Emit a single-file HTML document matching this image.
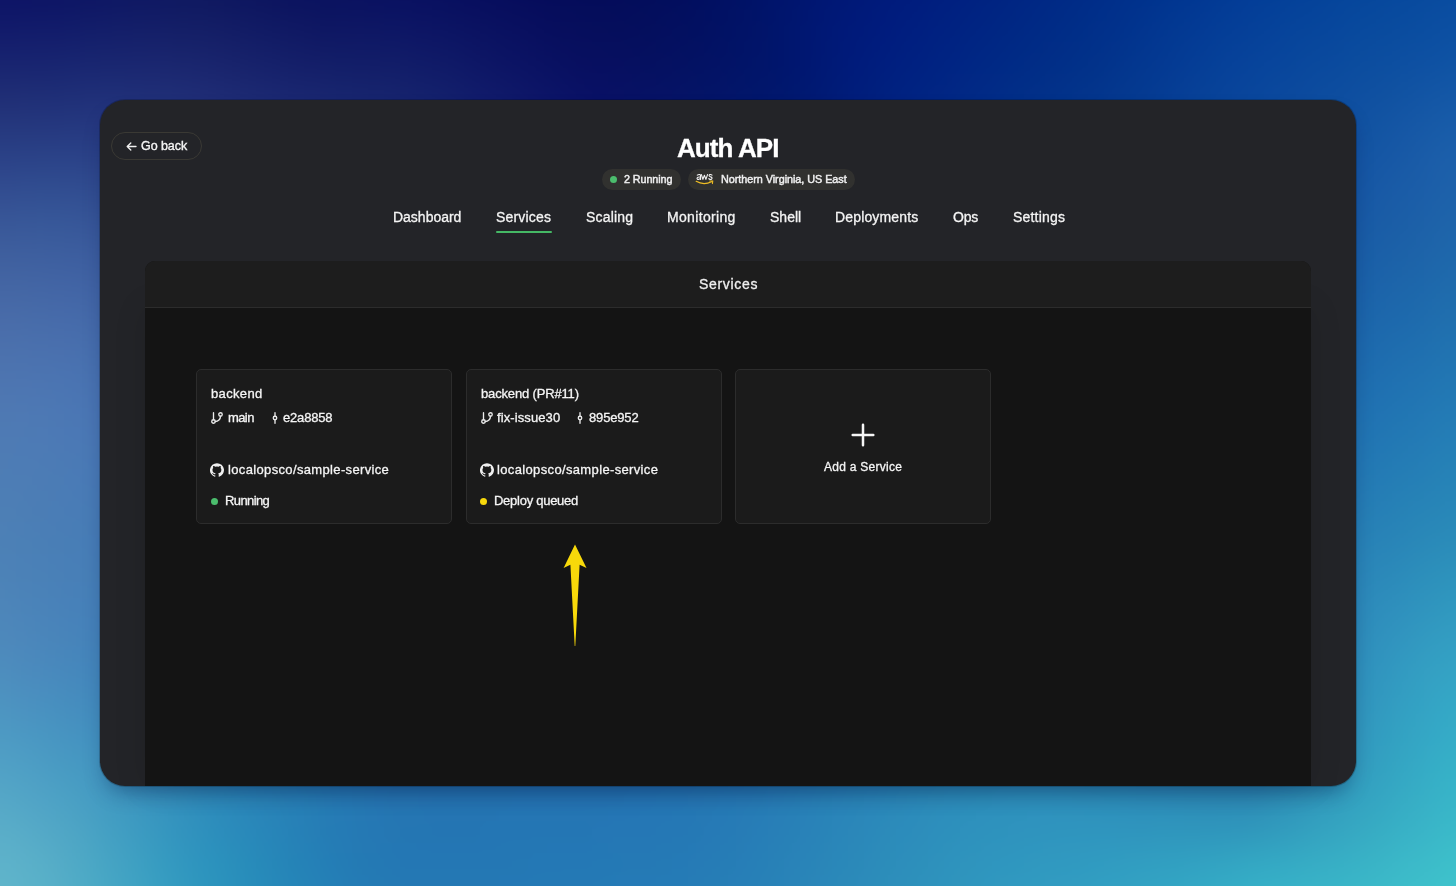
<!DOCTYPE html>
<html><head><meta charset="utf-8"><style>
html,body{margin:0;padding:0;width:1456px;height:886px;overflow:hidden;background:#1a4a9a;}
body{position:relative;font-family:"Liberation Sans",sans-serif;}
#bgw{position:absolute;left:0;top:0;width:1456px;height:886px;overflow:hidden}
#bg{position:absolute;left:-32px;top:-32px;width:1520px;height:950px;filter:blur(8px)}
#bg i{position:absolute;top:0;height:950px;display:block}
.panel{position:absolute;left:100px;top:100px;width:1256px;height:686px;border-radius:25px;background:#232428;box-shadow:0 0 0 1px rgba(0,0,0,.2),0 12px 22px -7px rgba(0,20,70,.42);overflow:hidden}
.t{position:absolute;white-space:nowrap;line-height:1;will-change:transform}
.ic{position:absolute;display:block;will-change:transform}
.goback{position:absolute;left:111.3px;top:132.2px;width:88.4px;height:26.2px;border:1px solid #3a3934;border-radius:15px}
.pill{position:absolute;top:169px;height:21px;border-radius:11px;background:#31312f}
.tab-ul{position:absolute;left:496px;top:231px;width:56px;height:2px;background:#45b865;border-radius:1px}
.svc{position:absolute;left:145px;top:261px;width:1166px;height:525px;border-radius:10px 10px 0 0;background:#141414;overflow:hidden}
.svcsh{position:absolute;left:145px;top:308px;width:1166px;height:478px;box-shadow:0 0 30px rgba(0,0,0,.12)}
.svc-h{position:absolute;left:0;top:0;width:1166px;height:46px;background:#1d1d1d;border-bottom:1px solid #2c2c2c}
.card{position:absolute;top:369px;width:254px;height:153px;background:#1b1b1b;border:1px solid #2c2c2c;border-radius:5px}
.dot{position:absolute;width:7px;height:7px;border-radius:50%}
</style></head><body>
<div id="bgw"><div id="bg">
<i style="left:0px;width:17px;background:linear-gradient(#0d1466 0px,#0d1466 32px,#121b6b 64px,#182470 96px,#1f2d75 128px,#25387e 160px,#2b4287 192px,#324d90 224px,#395798 256px,#3f5f9e 288px,#4466a4 320px,#496ba9 352px,#4c71ad 384px,#4e75b0 416px,#4e79b3 448px,#4e7bb4 480px,#4e7db4 512px,#4d7fb5 544px,#4d81b6 576px,#4d83b7 608px,#4d86b9 640px,#4e89bb 672px,#4e8ebe 704px,#4e94c1 736px,#4e9ac3 768px,#51a1c6 800px,#56a7c7 832px,#5aadc9 864px,#5eb2ca 896px,#60b6cb 928px,#60b6cb 950px)"></i>
<i style="left:16px;width:17px;background:linear-gradient(#0d1466 0px,#0d1466 32px,#121b6b 64px,#182470 96px,#1f2d75 128px,#25387e 160px,#2b4287 192px,#324d90 224px,#395798 256px,#3f5f9e 288px,#4466a4 320px,#496ba9 352px,#4c71ad 384px,#4e75b0 416px,#4e79b3 448px,#4e7bb4 480px,#4e7db4 512px,#4d7fb5 544px,#4d81b6 576px,#4d83b7 608px,#4d86b9 640px,#4e89bb 672px,#4e8ebe 704px,#4e94c1 736px,#4e9ac3 768px,#51a1c6 800px,#56a7c7 832px,#5aadc9 864px,#5eb2ca 896px,#60b6cb 928px,#60b6cb 950px)"></i>
<i style="left:32px;width:17px;background:linear-gradient(#0d1466 0px,#0d1466 32px,#121b6b 64px,#182470 96px,#1f2e75 128px,#25387e 160px,#2b4288 192px,#324d91 224px,#385798 256px,#3f5f9e 288px,#4466a4 320px,#496ca9 352px,#4b71ad 384px,#4d75b1 416px,#4e79b3 448px,#4e7bb4 480px,#4d7db5 512px,#4d7fb5 544px,#4c80b6 576px,#4c82b7 608px,#4d85b9 640px,#4d88bb 672px,#4d8dbe 704px,#4d93c0 736px,#4d9ac3 768px,#50a0c5 800px,#54a7c7 832px,#59adc8 864px,#5db2ca 896px,#5fb5ca 928px,#5fb5ca 950px)"></i>
<i style="left:48px;width:17px;background:linear-gradient(#0d1466 0px,#0d1466 32px,#121c6b 64px,#182470 96px,#1f2e76 128px,#25387e 160px,#2b4388 192px,#324e91 224px,#385899 256px,#3e5f9f 288px,#4466a4 320px,#486ca9 352px,#4b71ae 384px,#4d75b1 416px,#4e79b4 448px,#4d7bb5 480px,#4d7db5 512px,#4c7eb5 544px,#4b80b6 576px,#4b81b7 608px,#4b84b9 640px,#4c87bb 672px,#4b8bbd 704px,#4b91c0 736px,#4b98c3 768px,#4e9fc5 800px,#52a5c6 832px,#57abc8 864px,#5bb0c9 896px,#5cb3ca 928px,#5cb3ca 950px)"></i>
<i style="left:64px;width:17px;background:linear-gradient(#0d1565 0px,#0d1565 32px,#121c6b 64px,#182470 96px,#1f2e76 128px,#25387f 160px,#2b4388 192px,#314e91 224px,#385899 256px,#3e5f9f 288px,#4366a5 320px,#476caa 352px,#4a71ae 384px,#4c75b2 416px,#4d79b4 448px,#4d7bb5 480px,#4c7cb5 512px,#4b7db5 544px,#4a7fb6 576px,#4a81b7 608px,#4a83b9 640px,#4a86bb 672px,#4a8abd 704px,#4990c0 736px,#4997c2 768px,#4c9dc4 800px,#50a3c6 832px,#54a9c7 864px,#58afc8 896px,#59b2c9 928px,#59b2c9 950px)"></i>
<i style="left:80px;width:17px;background:linear-gradient(#0d1565 0px,#0d1565 32px,#121c6b 64px,#182570 96px,#1e2e77 128px,#25387f 160px,#2b4389 192px,#314e91 224px,#375899 256px,#3d5f9f 288px,#4365a5 320px,#476baa 352px,#4a70ae 384px,#4b75b2 416px,#4c78b4 448px,#4c7ab5 480px,#4b7cb5 512px,#4a7db6 544px,#497eb6 576px,#4980b7 608px,#4982b9 640px,#4985ba 672px,#4889bd 704px,#478fbf 736px,#4895c1 768px,#499bc3 800px,#4da2c5 832px,#51a7c6 864px,#55acc7 896px,#56afc8 928px,#56afc8 950px)"></i>
<i style="left:96px;width:17px;background:linear-gradient(#0d1665 0px,#0d1665 32px,#121d6b 64px,#182571 96px,#1f2f77 128px,#253980 160px,#2b4389 192px,#314e91 224px,#375799 256px,#3d5e9f 288px,#4265a5 320px,#466baa 352px,#4970ae 384px,#4a74b2 416px,#4b77b4 448px,#4b79b5 480px,#4a7bb6 512px,#497cb6 544px,#487eb6 576px,#487fb7 608px,#4781b9 640px,#4784ba 672px,#4688bc 704px,#468dbe 736px,#4693c1 768px,#479ac2 800px,#4aa0c4 832px,#4ea5c5 864px,#50aac6 896px,#51adc7 928px,#51adc7 950px)"></i>
<i style="left:112px;width:17px;background:linear-gradient(#0e1664 0px,#0e1664 32px,#131e6a 64px,#192671 96px,#1f2f78 128px,#253880 160px,#2b4388 192px,#314d91 224px,#375698 256px,#3c5e9f 288px,#4164a5 320px,#456aaa 352px,#476fae 384px,#4973b2 416px,#4a76b4 448px,#4a79b5 480px,#497ab6 512px,#487cb6 544px,#477db7 576px,#477fb7 608px,#4681b9 640px,#4583ba 672px,#4487bc 704px,#448cbe 736px,#4492c0 768px,#4598c2 800px,#479dc3 832px,#4aa3c4 864px,#4ca8c5 896px,#4dabc6 928px,#4dabc6 950px)"></i>
<i style="left:128px;width:17px;background:linear-gradient(#0e1764 0px,#0e1764 32px,#131e6a 64px,#192670 96px,#1f2f78 128px,#253880 160px,#2b4288 192px,#304c90 224px,#365598 256px,#3b5c9f 288px,#4063a4 320px,#4369a9 352px,#466eae 384px,#4872b1 416px,#4975b4 448px,#4978b5 480px,#487ab6 512px,#477bb6 544px,#467cb7 576px,#457eb7 608px,#4580b9 640px,#4483ba 672px,#4386bc 704px,#428bbd 736px,#4190bf 768px,#4296c1 800px,#439bc2 832px,#45a0c3 864px,#47a5c4 896px,#48a8c5 928px,#48a8c5 950px)"></i>
<i style="left:144px;width:17px;background:linear-gradient(#0e1864 0px,#0e1864 32px,#141f6a 64px,#192670 96px,#1f2f78 128px,#25387f 160px,#2b4188 192px,#304b90 224px,#355497 256px,#3a5b9e 288px,#3f62a4 320px,#4268a9 352px,#456dad 384px,#4771b1 416px,#4774b3 448px,#4777b5 480px,#4779b6 512px,#467ab6 544px,#457cb7 576px,#447eb8 608px,#4380b9 640px,#4282ba 672px,#4186bb 704px,#408abd 736px,#3f8fbe 768px,#3f94c0 800px,#4099c1 832px,#419ec2 864px,#43a2c3 896px,#43a5c4 928px,#43a5c4 950px)"></i>
<i style="left:160px;width:17px;background:linear-gradient(#0f1863 0px,#0f1863 32px,#141f69 64px,#1a2670 96px,#1f2f77 128px,#25377f 160px,#2a4187 192px,#304a8f 224px,#355297 256px,#3a5a9d 288px,#3e61a3 320px,#4167a8 352px,#446cad 384px,#4570b0 416px,#4673b3 448px,#4676b4 480px,#4678b5 512px,#457ab6 544px,#447bb7 576px,#437db7 608px,#427fb8 640px,#4082ba 672px,#3f85bb 704px,#3e89bc 736px,#3d8dbe 768px,#3c92bf 800px,#3d97c0 832px,#3d9bc1 864px,#3ea0c2 896px,#3fa3c3 928px,#3fa3c3 950px)"></i>
<i style="left:176px;width:17px;background:linear-gradient(#0f1863 0px,#0f1863 32px,#141f69 64px,#1a2670 96px,#1f2e77 128px,#25377f 160px,#2a4087 192px,#2f498e 224px,#345196 256px,#39599c 288px,#3d5fa2 320px,#4065a8 352px,#426aac 384px,#446faf 416px,#4572b2 448px,#4575b4 480px,#4477b5 512px,#4479b6 544px,#437bb7 576px,#417cb7 608px,#407eb8 640px,#3f81b9 672px,#3d84ba 704px,#3c88bc 736px,#3a8cbd 768px,#3a90be 800px,#3994bf 832px,#3999c0 864px,#399dc1 896px,#3aa0c2 928px,#3aa0c2 950px)"></i>
<i style="left:192px;width:17px;background:linear-gradient(#0f1962 0px,#0f1962 32px,#141f68 64px,#1a266f 96px,#1f2e76 128px,#25367e 160px,#2a3f86 192px,#2f478e 224px,#335095 256px,#38579c 288px,#3b5ea2 320px,#3f64a7 352px,#4169ab 384px,#436daf 416px,#4371b1 448px,#4474b3 480px,#4376b5 512px,#4278b6 544px,#417ab7 576px,#407cb7 608px,#3f7eb8 640px,#3d80b9 672px,#3b83ba 704px,#3a86bb 736px,#388abc 768px,#378ebd 800px,#3692be 832px,#3596bf 864px,#359ac0 896px,#369dc1 928px,#369dc1 950px)"></i>
<i style="left:208px;width:17px;background:linear-gradient(#0f1961 0px,#0f1961 32px,#141f67 64px,#1a266e 96px,#1f2d76 128px,#24357d 160px,#293e85 192px,#2e468d 224px,#324e94 256px,#37569b 288px,#3a5ca1 320px,#3d62a6 352px,#4067aa 384px,#416cae 416px,#4270b1 448px,#4273b3 480px,#4275b4 512px,#4178b5 544px,#4079b6 576px,#3f7bb7 608px,#3d7db8 640px,#3c80b9 672px,#3a82b9 704px,#3885ba 736px,#3688bb 768px,#348cbc 800px,#3390bd 832px,#3293be 864px,#3197bf 896px,#329abf 928px,#329abf 950px)"></i>
<i style="left:224px;width:17px;background:linear-gradient(#0f1961 0px,#0f1961 32px,#141f67 64px,#19256e 96px,#1f2c75 128px,#24347d 160px,#293c84 192px,#2d458c 224px,#324d93 256px,#36549a 288px,#395ba0 320px,#3c61a5 352px,#3e66aa 384px,#406bad 416px,#416eb0 448px,#4172b2 480px,#4174b4 512px,#4077b5 544px,#3f79b6 576px,#3e7bb7 608px,#3c7db8 640px,#3a7fb8 672px,#3881b9 704px,#3684ba 736px,#3487bb 768px,#328abb 800px,#308dbc 832px,#2f91bd 864px,#2e94be 896px,#2e97be 928px,#2e97be 950px)"></i>
<i style="left:240px;width:17px;background:linear-gradient(#0f1860 0px,#0f1860 32px,#141e66 64px,#19246d 96px,#1e2b74 128px,#23337c 160px,#283b83 192px,#2c438b 224px,#314b92 256px,#345399 288px,#38599f 320px,#3b5fa4 352px,#3d65a9 384px,#3e69ad 416px,#3f6db0 448px,#4071b2 480px,#3f73b4 512px,#3f76b5 544px,#3e78b6 576px,#3c7ab7 608px,#3b7cb7 640px,#397eb8 672px,#3780b9 704px,#3583b9 736px,#3285ba 768px,#3088ba 800px,#2e8bbb 832px,#2c8ebc 864px,#2b92bd 896px,#2c94bd 928px,#2c94bd 950px)"></i>
<i style="left:256px;width:17px;background:linear-gradient(#0e1760 0px,#0e1760 32px,#131d66 64px,#18236c 96px,#1d2a73 128px,#22327b 160px,#273a82 192px,#2b428a 224px,#304a91 256px,#335198 288px,#37589e 320px,#395ea4 352px,#3c63a8 384px,#3d68ac 416px,#3e6caf 448px,#3e6fb1 480px,#3e73b3 512px,#3e75b4 544px,#3d78b5 576px,#3b7ab6 608px,#3a7cb7 640px,#387eb8 672px,#3580b8 704px,#3382b9 736px,#3184b9 768px,#2e86ba 800px,#2c89ba 832px,#2b8bbb 864px,#2a8fbb 896px,#2a91bc 928px,#2a91bc 950px)"></i>
<i style="left:272px;width:17px;background:linear-gradient(#0d1660 0px,#0d1660 32px,#121c65 64px,#17226b 96px,#1c2972 128px,#21317a 160px,#263981 192px,#2a4189 224px,#2f4890 256px,#325097 288px,#35569d 320px,#385ca3 352px,#3a62a7 384px,#3c66ab 416px,#3d6bae 448px,#3d6eb1 480px,#3d72b3 512px,#3c74b4 544px,#3b77b5 576px,#3a79b6 608px,#387bb7 640px,#367db7 672px,#347fb8 704px,#3280b8 736px,#2f82b8 768px,#2d84b9 800px,#2b86b9 832px,#2989ba 864px,#288cba 896px,#288ebb 928px,#288ebb 950px)"></i>
<i style="left:288px;width:17px;background:linear-gradient(#0d155f 0px,#0d155f 32px,#111b65 64px,#16216b 96px,#1b2871 128px,#203079 160px,#253880 192px,#294088 224px,#2d478f 256px,#314e96 288px,#34559c 320px,#375ba2 352px,#3960a7 384px,#3a65ab 416px,#3b69ae 448px,#3c6db0 480px,#3c71b2 512px,#3b74b4 544px,#3a76b5 576px,#3979b6 608px,#377bb6 640px,#357cb7 672px,#337eb7 704px,#317fb7 736px,#2e81b8 768px,#2c82b8 800px,#2a84b8 832px,#2886b9 864px,#2789b9 896px,#278bba 928px,#278bba 950px)"></i>
<i style="left:304px;width:17px;background:linear-gradient(#0c145f 0px,#0c145f 32px,#101a64 64px,#15206a 96px,#1a2771 128px,#1f2f78 160px,#24377f 192px,#283e87 224px,#2c468e 256px,#304d95 288px,#33539b 320px,#3559a1 352px,#375fa6 384px,#3964aa 416px,#3a68ad 448px,#3a6cb0 480px,#3a70b2 512px,#3a73b3 544px,#3976b4 576px,#3878b5 608px,#367ab6 640px,#347cb6 672px,#327db7 704px,#307eb7 736px,#2d7fb7 768px,#2b80b7 800px,#2982b7 832px,#2784b8 864px,#2686b8 896px,#2688b9 928px,#2688b9 950px)"></i>
<i style="left:320px;width:17px;background:linear-gradient(#0b135f 0px,#0b135f 32px,#101964 64px,#141f69 96px,#192670 128px,#1e2e77 160px,#23367e 192px,#273d86 224px,#2b448d 256px,#2f4b94 288px,#32529b 320px,#3458a0 352px,#365da5 384px,#3862a9 416px,#3967ac 448px,#396baf 480px,#396fb1 512px,#3972b3 544px,#3875b4 576px,#3777b5 608px,#3579b6 640px,#347bb6 672px,#317cb6 704px,#2f7db6 736px,#2c7eb6 768px,#2a7fb6 800px,#2880b7 832px,#2681b7 864px,#2583b7 896px,#2586b8 928px,#2586b8 950px)"></i>
<i style="left:336px;width:17px;background:linear-gradient(#0b135f 0px,#0b135f 32px,#0f1863 64px,#141e69 96px,#19266f 128px,#1e2d76 160px,#22357e 192px,#263c85 224px,#2a438c 256px,#2d4a93 288px,#30509a 320px,#3356a0 352px,#355ca4 384px,#3661a8 416px,#3766ac 448px,#386aaf 480px,#386eb1 512px,#3871b2 544px,#3774b4 576px,#3677b5 608px,#3579b5 640px,#337ab6 672px,#317cb6 704px,#2e7cb6 736px,#2c7db6 768px,#297db6 800px,#277eb6 832px,#267fb6 864px,#2581b7 896px,#2583b7 928px,#2583b7 950px)"></i>
<i style="left:352px;width:17px;background:linear-gradient(#0a125f 0px,#0a125f 32px,#0e1763 64px,#131e68 96px,#18256f 128px,#1d2c75 160px,#21347d 192px,#253b84 224px,#29418c 256px,#2c4893 288px,#2f4f99 320px,#31559f 352px,#335aa4 384px,#3560a8 416px,#3664ab 448px,#3769ae 480px,#376db0 512px,#3770b2 544px,#3673b3 576px,#3576b4 608px,#3478b5 640px,#327ab5 672px,#307bb5 704px,#2e7bb5 736px,#2b7bb5 768px,#297bb5 800px,#277cb5 832px,#257cb5 864px,#247eb6 896px,#2481b6 928px,#2481b6 950px)"></i>
<i style="left:368px;width:17px;background:linear-gradient(#0a1260 0px,#0a1260 32px,#0e1764 64px,#121e68 96px,#17256e 128px,#1c2c75 160px,#20337c 192px,#243983 224px,#28408b 256px,#2b4792 288px,#2e4d98 320px,#30539e 352px,#3259a3 384px,#345ea7 416px,#3563ab 448px,#3668ad 480px,#366cb0 512px,#366fb1 544px,#3573b3 576px,#3476b4 608px,#3378b5 640px,#3179b5 672px,#2f7ab5 704px,#2d7ab5 736px,#2b7ab5 768px,#287ab5 800px,#267ab5 832px,#257bb5 864px,#247cb5 896px,#247eb6 928px,#247eb6 950px)"></i>
<i style="left:384px;width:17px;background:linear-gradient(#0a1260 0px,#0a1260 32px,#0e1764 64px,#121d68 96px,#17246e 128px,#1b2b74 160px,#1f317b 192px,#233883 224px,#263f8a 256px,#2a4591 288px,#2c4c98 320px,#2f529d 352px,#3157a2 384px,#325da6 416px,#3462aa 448px,#3467ad 480px,#356baf 512px,#356fb1 544px,#3472b2 576px,#3475b3 608px,#3277b4 640px,#3179b5 672px,#2f7ab5 704px,#2d7ab5 736px,#2a79b4 768px,#2879b4 800px,#2679b4 832px,#2579b4 864px,#247ab4 896px,#247cb5 928px,#247cb5 950px)"></i>
<i style="left:400px;width:17px;background:linear-gradient(#0a1161 0px,#0a1161 32px,#0e1764 64px,#121d68 96px,#16246d 128px,#1b2a74 160px,#1e307a 192px,#223782 224px,#253d89 256px,#284490 288px,#2b4a97 320px,#2d509d 352px,#2f56a2 384px,#315ca6 416px,#3261a9 448px,#3365ac 480px,#346aaf 512px,#346eb1 544px,#3371b2 576px,#3374b3 608px,#3277b4 640px,#3079b4 672px,#2e79b4 704px,#2c79b4 736px,#2a78b4 768px,#2878b4 800px,#2677b4 832px,#2578b4 864px,#2479b4 896px,#247bb5 928px,#247bb5 950px)"></i>
<i style="left:416px;width:17px;background:linear-gradient(#091161 0px,#091161 32px,#0d1765 64px,#121d68 96px,#16236d 128px,#1a2973 160px,#1d2f7a 192px,#213581 224px,#243c88 256px,#27428f 288px,#2a4896 320px,#2c4f9c 352px,#2e55a1 384px,#305aa5 416px,#315fa9 448px,#3264ac 480px,#3369ae 512px,#336db0 544px,#3270b2 576px,#3274b3 608px,#3176b4 640px,#3078b4 672px,#2e79b4 704px,#2c78b4 736px,#2a78b4 768px,#2877b4 800px,#2676b3 832px,#2577b3 864px,#2478b4 896px,#247ab4 928px,#247ab4 950px)"></i>
<i style="left:432px;width:17px;background:linear-gradient(#091161 0px,#091161 32px,#0d1665 64px,#111c68 96px,#15226d 128px,#192872 160px,#1c2e79 192px,#203480 224px,#233a87 256px,#26408e 288px,#284795 320px,#2b4d9b 352px,#2d53a0 384px,#2f59a4 416px,#305ea8 448px,#3163ab 480px,#3168ae 512px,#326cb0 544px,#3270b1 576px,#3173b2 608px,#3075b3 640px,#2f77b4 672px,#2d78b4 704px,#2b78b4 736px,#2977b4 768px,#2776b3 800px,#2676b3 832px,#2476b3 864px,#2477b4 896px,#2479b4 928px,#2479b4 950px)"></i>
<i style="left:448px;width:17px;background:linear-gradient(#091061 0px,#091061 32px,#0d1564 64px,#101b68 96px,#14216c 128px,#182772 160px,#1b2c78 192px,#1e327f 224px,#213886 256px,#243f8e 288px,#274594 320px,#294c9a 352px,#2c529f 384px,#2d58a4 416px,#2f5da7 448px,#3062ab 480px,#3067ad 512px,#316baf 544px,#316fb1 576px,#3072b2 608px,#3075b3 640px,#2e76b4 672px,#2d77b4 704px,#2b77b4 736px,#2976b3 768px,#2776b3 800px,#2675b3 832px,#2476b3 864px,#2477b4 896px,#2479b4 928px,#2479b4 950px)"></i>
<i style="left:464px;width:17px;background:linear-gradient(#081060 0px,#081060 32px,#0c1564 64px,#101a67 96px,#13206c 128px,#172571 160px,#1a2b78 192px,#1d317e 224px,#203786 256px,#233d8d 288px,#264493 320px,#284a99 352px,#2a509e 384px,#2c56a3 416px,#2d5ca7 448px,#2f61aa 480px,#2f66ad 512px,#306aaf 544px,#306eb1 576px,#2f71b2 608px,#2f74b3 640px,#2e75b3 672px,#2c76b4 704px,#2b76b4 736px,#2976b3 768px,#2775b3 800px,#2575b3 832px,#2475b3 864px,#2477b4 896px,#2479b4 928px,#2479b4 950px)"></i>
<i style="left:480px;width:17px;background:linear-gradient(#080f5f 0px,#080f5f 32px,#0b1463 64px,#0f1967 96px,#121e6b 128px,#162371 160px,#192977 192px,#1c2f7e 224px,#1f3585 256px,#223c8c 288px,#244292 320px,#274998 352px,#294f9d 384px,#2b55a2 416px,#2c5ba6 448px,#2d60a9 480px,#2e65ac 512px,#2f69af 544px,#2f6db0 576px,#2f70b2 608px,#2e73b3 640px,#2d75b3 672px,#2c75b3 704px,#2a75b3 736px,#2875b3 768px,#2775b3 800px,#2575b3 832px,#2475b3 864px,#2477b4 896px,#2479b4 928px,#2479b4 950px)"></i>
<i style="left:496px;width:17px;background:linear-gradient(#080e5f 0px,#080e5f 32px,#0b1362 64px,#0e1766 96px,#111c6b 128px,#142170 160px,#172776 192px,#1a2d7d 224px,#1d3384 256px,#203a8b 288px,#234191 320px,#254797 352px,#284e9d 384px,#2a54a1 416px,#2b5aa5 448px,#2c5fa9 480px,#2d64ac 512px,#2e68ae 544px,#2e6cb0 576px,#2e6fb1 608px,#2d72b2 640px,#2c74b3 672px,#2b75b3 704px,#2a75b3 736px,#2875b3 768px,#2775b3 800px,#2575b3 832px,#2475b3 864px,#2477b4 896px,#2479b4 928px,#2479b4 950px)"></i>
<i style="left:512px;width:17px;background:linear-gradient(#070e5e 0px,#070e5e 32px,#0a1261 64px,#0d1665 96px,#101a6a 128px,#131f6f 160px,#162575 192px,#192b7c 224px,#1c3283 256px,#1f388a 288px,#223f90 320px,#244696 352px,#264c9c 384px,#2853a1 416px,#2a58a5 448px,#2b5ea8 480px,#2c63ab 512px,#2d67ae 544px,#2d6bb0 576px,#2d6fb1 608px,#2d71b2 640px,#2c73b3 672px,#2b74b3 704px,#2974b3 736px,#2874b3 768px,#2674b3 800px,#2575b3 832px,#2476b4 864px,#2477b4 896px,#2479b5 928px,#2479b5 950px)"></i>
<i style="left:528px;width:17px;background:linear-gradient(#070d5d 0px,#070d5d 32px,#091161 64px,#0c1464 96px,#0f1969 128px,#121e6e 160px,#152374 192px,#18297b 224px,#1b3082 256px,#1d3789 288px,#203e8f 320px,#234495 352px,#254b9b 384px,#2751a0 416px,#2957a4 448px,#2a5da8 480px,#2b62ab 512px,#2c67ae 544px,#2c6bb0 576px,#2c6eb1 608px,#2c70b2 640px,#2b72b3 672px,#2a73b3 704px,#2974b3 736px,#2874b3 768px,#2674b3 800px,#2575b3 832px,#2476b4 864px,#2477b4 896px,#2479b5 928px,#2479b5 950px)"></i>
<i style="left:544px;width:17px;background:linear-gradient(#060d5c 0px,#060d5c 32px,#091060 64px,#0b1364 96px,#0e1768 128px,#101c6e 160px,#132174 192px,#16287a 224px,#192e81 256px,#1c3588 288px,#1f3c8e 320px,#214395 352px,#244a9a 384px,#26509f 416px,#2857a4 448px,#295ca8 480px,#2a61ab 512px,#2b66ad 544px,#2c6aaf 576px,#2c6db1 608px,#2b70b2 640px,#2b71b3 672px,#2a73b3 704px,#2973b3 736px,#2774b3 768px,#2674b3 800px,#2575b4 832px,#2476b4 864px,#2478b4 896px,#2479b5 928px,#2479b5 950px)"></i>
<i style="left:560px;width:17px;background:linear-gradient(#060c5c 0px,#060c5c 32px,#080f5f 64px,#0a1263 96px,#0d1567 128px,#0f1a6d 160px,#122073 192px,#152679 224px,#182d80 256px,#1b3487 288px,#1e3b8e 320px,#204294 352px,#23499a 384px,#25509f 416px,#2756a3 448px,#285ba7 480px,#2961ab 512px,#2a65ad 544px,#2b69af 576px,#2b6cb1 608px,#2b6fb2 640px,#2a71b3 672px,#2972b3 704px,#2873b3 736px,#2773b3 768px,#2674b4 800px,#2575b4 832px,#2476b4 864px,#2478b5 896px,#2479b5 928px,#2479b5 950px)"></i>
<i style="left:576px;width:17px;background:linear-gradient(#050c5b 0px,#050c5b 32px,#070e5e 64px,#091162 96px,#0b1467 128px,#0e186c 160px,#111e72 192px,#132479 224px,#162b7f 256px,#193386 288px,#1c3a8d 320px,#1f4193 352px,#214899 384px,#244f9e 416px,#2655a3 448px,#275ba7 480px,#2960aa 512px,#2965ad 544px,#2a69af 576px,#2a6cb1 608px,#2a6fb2 640px,#2a71b3 672px,#2972b3 704px,#2873b3 736px,#2773b4 768px,#2674b4 800px,#2575b4 832px,#2476b4 864px,#2478b5 896px,#247ab5 928px,#247ab5 950px)"></i>
<i style="left:592px;width:17px;background:linear-gradient(#050c5b 0px,#050c5b 32px,#070e5d 64px,#081061 96px,#0a1266 128px,#0d176b 160px,#0f1d71 192px,#122378 224px,#152a7f 256px,#183186 288px,#1b398c 320px,#1e4093 352px,#204799 384px,#234e9e 416px,#2554a3 448px,#265aa7 480px,#2860aa 512px,#2964ad 544px,#2968af 576px,#2a6cb1 608px,#296eb2 640px,#2970b3 672px,#2872b3 704px,#2873b4 736px,#2773b4 768px,#2674b4 800px,#2575b4 832px,#2476b4 864px,#2478b5 896px,#247ab5 928px,#247ab5 950px)"></i>
<i style="left:608px;width:17px;background:linear-gradient(#040c5a 0px,#040c5a 32px,#060e5d 64px,#080f60 96px,#091165 128px,#0b166b 160px,#0e1b71 192px,#112277 224px,#14297e 256px,#173185 288px,#1a388c 320px,#1d3f92 352px,#1f4798 384px,#224d9e 416px,#2454a3 448px,#265aa7 480px,#275faa 512px,#2864ad 544px,#2968af 576px,#296bb1 608px,#296eb2 640px,#2970b3 672px,#2871b3 704px,#2772b4 736px,#2773b4 768px,#2674b4 800px,#2575b4 832px,#2476b4 864px,#2478b5 896px,#247ab5 928px,#247ab5 950px)"></i>
<i style="left:624px;width:17px;background:linear-gradient(#040c5a 0px,#040c5a 32px,#060e5c 64px,#070f60 96px,#081065 128px,#0a156a 160px,#0d1b70 192px,#102177 224px,#13287e 256px,#163085 288px,#19378b 320px,#1b3f92 352px,#1e4698 384px,#214d9e 416px,#2353a2 448px,#2559a7 480px,#265faa 512px,#2764ad 544px,#2868af 576px,#286bb1 608px,#296eb2 640px,#2870b3 672px,#2871b4 704px,#2772b4 736px,#2673b4 768px,#2674b4 800px,#2575b4 832px,#2577b5 864px,#2479b5 896px,#247ab6 928px,#247ab6 950px)"></i>
<i style="left:640px;width:17px;background:linear-gradient(#040c5b 0px,#040c5b 32px,#050e5c 64px,#070f60 96px,#081164 128px,#09156a 160px,#0c1a70 192px,#0f2176 224px,#11287d 256px,#142f84 288px,#17378b 320px,#1a3e92 352px,#1d4698 384px,#204d9d 416px,#2253a2 448px,#2459a7 480px,#255faa 512px,#2764ad 544px,#2768af 576px,#286bb1 608px,#286eb2 640px,#2870b3 672px,#2871b4 704px,#2773b4 736px,#2674b4 768px,#2674b4 800px,#2575b4 832px,#2577b5 864px,#2479b5 896px,#257bb6 928px,#257bb6 950px)"></i>
<i style="left:656px;width:17px;background:linear-gradient(#030d5b 0px,#030d5b 32px,#050e5d 64px,#061060 96px,#071164 128px,#09156a 160px,#0b1a70 192px,#0e2076 224px,#10277d 256px,#132f84 288px,#16368b 320px,#193e91 352px,#1c4598 384px,#1f4c9d 416px,#2153a2 448px,#2359a7 480px,#255faa 512px,#2664ad 544px,#2768b0 576px,#276bb1 608px,#286eb3 640px,#2870b3 672px,#2772b4 704px,#2773b4 736px,#2674b4 768px,#2675b4 800px,#2576b5 832px,#2577b5 864px,#2579b5 896px,#257bb6 928px,#257bb6 950px)"></i>
<i style="left:672px;width:17px;background:linear-gradient(#030d5c 0px,#030d5c 32px,#040f5d 64px,#051060 96px,#061265 128px,#08156a 160px,#0a1a70 192px,#0d2076 224px,#0f277d 256px,#122e84 288px,#15368b 320px,#183e91 352px,#1b4598 384px,#1e4c9d 416px,#2053a3 448px,#2259a7 480px,#245fab 512px,#2664ae 544px,#2668b0 576px,#276bb2 608px,#276eb3 640px,#2770b4 672px,#2772b4 704px,#2773b4 736px,#2674b5 768px,#2675b5 800px,#2576b5 832px,#2577b5 864px,#2579b5 896px,#257bb6 928px,#257bb6 950px)"></i>
<i style="left:688px;width:17px;background:linear-gradient(#020e5d 0px,#020e5d 32px,#040f5f 64px,#051161 96px,#061265 128px,#07166a 160px,#091a70 192px,#0c2076 224px,#0e277d 256px,#112e84 288px,#14368b 320px,#173e91 352px,#1a4598 384px,#1d4c9e 416px,#2053a3 448px,#2259a7 480px,#245fab 512px,#2564ae 544px,#2668b0 576px,#276cb2 608px,#276fb3 640px,#2771b4 672px,#2772b4 704px,#2774b5 736px,#2675b5 768px,#2676b5 800px,#2577b5 832px,#2578b5 864px,#257ab5 896px,#257cb6 928px,#257cb6 950px)"></i>
<i style="left:704px;width:17px;background:linear-gradient(#020e5e 0px,#020e5e 32px,#031060 64px,#041162 96px,#051366 128px,#06166a 160px,#081b70 192px,#0b2176 224px,#0d277d 256px,#102e84 288px,#13368b 320px,#163e91 352px,#194598 384px,#1c4c9e 416px,#1f53a3 448px,#215aa8 480px,#235fab 512px,#2464ae 544px,#2669b0 576px,#266cb2 608px,#276fb3 640px,#2771b4 672px,#2773b5 704px,#2774b5 736px,#2675b5 768px,#2676b5 800px,#2577b5 832px,#2578b5 864px,#257ab6 896px,#257cb6 928px,#257cb6 950px)"></i>
<i style="left:720px;width:17px;background:linear-gradient(#010f60 0px,#010f60 32px,#021061 64px,#031263 96px,#041466 128px,#05176b 160px,#071b70 192px,#0a2177 224px,#0c287d 256px,#0f2f84 288px,#12368b 320px,#153e92 352px,#194598 384px,#1b4d9e 416px,#1e54a3 448px,#215aa8 480px,#2260ac 512px,#2465ae 544px,#2569b1 576px,#266db2 608px,#2770b4 640px,#2772b5 672px,#2774b5 704px,#2775b5 736px,#2676b5 768px,#2677b5 800px,#2678b5 832px,#2579b5 864px,#267bb6 896px,#267db6 928px,#267db6 950px)"></i>
<i style="left:736px;width:17px;background:linear-gradient(#011062 0px,#011062 32px,#021163 64px,#031265 96px,#031467 128px,#05176c 160px,#071c71 192px,#092177 224px,#0c287e 256px,#0e2f84 288px,#11368b 320px,#153e92 352px,#184698 384px,#1b4d9e 416px,#1e54a4 448px,#205aa8 480px,#2260ac 512px,#2465af 544px,#256ab1 576px,#266db3 608px,#2670b4 640px,#2773b5 672px,#2775b5 704px,#2776b6 736px,#2777b6 768px,#2678b6 800px,#2679b5 832px,#267ab6 864px,#267cb6 896px,#267eb6 928px,#267eb6 950px)"></i>
<i style="left:752px;width:17px;background:linear-gradient(#011164 0px,#011164 32px,#011265 64px,#021366 96px,#031569 128px,#04186d 160px,#061c72 192px,#082278 224px,#0b287e 256px,#0e2f85 288px,#11378c 320px,#143e92 352px,#174699 384px,#1a4d9f 416px,#1d54a4 448px,#1f5ba9 480px,#2161ac 512px,#2366af 544px,#246ab1 576px,#256eb3 608px,#2671b4 640px,#2774b5 672px,#2776b6 704px,#2777b6 736px,#2778b6 768px,#2779b6 800px,#267ab6 832px,#267bb6 864px,#267db6 896px,#277fb7 928px,#277fb7 950px)"></i>
<i style="left:768px;width:17px;background:linear-gradient(#001266 0px,#001266 32px,#011367 64px,#011468 96px,#02166a 128px,#03196e 160px,#051d73 192px,#072379 224px,#0a297f 256px,#0d3086 288px,#10378c 320px,#133f93 352px,#164699 384px,#194e9f 416px,#1c55a4 448px,#1f5ca9 480px,#2161ad 512px,#2367b0 544px,#246bb2 576px,#256fb4 608px,#2672b5 640px,#2775b6 672px,#2777b6 704px,#2778b6 736px,#2779b6 768px,#277ab6 800px,#277bb6 832px,#277cb6 864px,#277eb7 896px,#2780b7 928px,#2780b7 950px)"></i>
<i style="left:784px;width:17px;background:linear-gradient(#001369 0px,#001369 32px,#011469 64px,#01156a 96px,#01166b 128px,#03196f 160px,#041e74 192px,#07237a 224px,#092a80 256px,#0c3186 288px,#0f388d 320px,#123f93 352px,#15479a 384px,#184e9f 416px,#1b56a5 448px,#1e5ca9 480px,#2062ad 512px,#2267b0 544px,#246cb2 576px,#2570b4 608px,#2673b5 640px,#2776b6 672px,#2778b7 704px,#2779b7 736px,#277ab7 768px,#277bb7 800px,#277cb6 832px,#277eb7 864px,#2780b7 896px,#2881b7 928px,#2881b7 950px)"></i>
<i style="left:800px;width:17px;background:linear-gradient(#00146c 0px,#00146c 32px,#00156c 64px,#00156c 96px,#01176d 128px,#021a70 160px,#041f75 192px,#06247b 224px,#082b81 256px,#0b3187 288px,#0e398e 320px,#114094 352px,#15489a 384px,#184fa0 416px,#1b56a5 448px,#1d5daa 480px,#2063ad 512px,#2268b0 544px,#246db3 576px,#2571b4 608px,#2674b6 640px,#2777b6 672px,#2779b7 704px,#287bb7 736px,#287cb7 768px,#287db7 800px,#287eb7 832px,#287fb7 864px,#2881b7 896px,#2883b8 928px,#2883b8 950px)"></i>
<i style="left:816px;width:17px;background:linear-gradient(#00156e 0px,#00156e 32px,#00166f 64px,#00166f 96px,#00186f 128px,#011b72 160px,#032077 192px,#05257c 224px,#082c82 256px,#0b3288 288px,#0e398f 320px,#114195 352px,#14489b 384px,#1750a0 416px,#1a57a5 448px,#1d5daa 480px,#1f64ae 512px,#2169b1 544px,#236eb3 576px,#2572b5 608px,#2676b6 640px,#2778b7 672px,#277bb7 704px,#287cb8 736px,#287db8 768px,#287eb7 800px,#287fb7 832px,#2881b7 864px,#2983b8 896px,#2985b8 928px,#2985b8 950px)"></i>
<i style="left:832px;width:17px;background:linear-gradient(#001671 0px,#001671 32px,#001772 64px,#001772 96px,#001972 128px,#011c74 160px,#032179 192px,#05267e 224px,#072d83 256px,#0a3389 288px,#0d3a90 320px,#104296 352px,#13499b 384px,#1650a1 416px,#1958a6 448px,#1c5eaa 480px,#1f64ae 512px,#216ab1 544px,#236fb3 576px,#2573b5 608px,#2677b7 640px,#277ab7 672px,#287cb8 704px,#287eb8 736px,#287fb8 768px,#2980b8 800px,#2981b8 832px,#2982b8 864px,#2984b8 896px,#2a86b9 928px,#2a86b9 950px)"></i>
<i style="left:848px;width:17px;background:linear-gradient(#001774 0px,#001774 32px,#001875 64px,#001975 96px,#001a75 128px,#011e77 160px,#03227b 192px,#05287f 224px,#072e85 256px,#09348b 288px,#0c3b91 320px,#0f4396 352px,#134a9c 384px,#1651a1 416px,#1958a6 448px,#1c5fab 480px,#1e65ae 512px,#216bb1 544px,#2370b4 576px,#2575b6 608px,#2678b7 640px,#277bb8 672px,#287db8 704px,#287fb9 736px,#2980b8 768px,#2981b8 800px,#2983b8 832px,#2984b8 864px,#2a86b8 896px,#2a88b9 928px,#2a88b9 950px)"></i>
<i style="left:864px;width:17px;background:linear-gradient(#001876 0px,#001876 32px,#001978 64px,#001a78 96px,#001c78 128px,#011f7a 160px,#02237d 192px,#042981 224px,#062f86 256px,#09358c 288px,#0c3c92 320px,#0f4397 352px,#124b9d 384px,#1552a2 416px,#1859a7 448px,#1b60ab 480px,#1e66af 512px,#216cb2 544px,#2371b4 576px,#2576b6 608px,#267ab7 640px,#277db8 672px,#287fb9 704px,#2981b9 736px,#2982b9 768px,#2983b9 800px,#2a84b9 832px,#2a86b9 864px,#2a88b9 896px,#2b8ab9 928px,#2b8ab9 950px)"></i>
<i style="left:880px;width:17px;background:linear-gradient(#001978 0px,#001978 32px,#001a7a 64px,#001b7b 96px,#001d7b 128px,#01217c 160px,#02257f 192px,#042a83 224px,#063088 256px,#09368d 288px,#0b3d93 320px,#0e4498 352px,#114c9e 384px,#1553a3 416px,#185aa7 448px,#1b61ab 480px,#1e67af 512px,#206db2 544px,#2373b4 576px,#2577b6 608px,#267bb8 640px,#287eb9 672px,#2981b9 704px,#2982ba 736px,#2a84b9 768px,#2a85b9 800px,#2a86b9 832px,#2b87b9 864px,#2b89b9 896px,#2c8bba 928px,#2c8bba 950px)"></i>
<i style="left:896px;width:17px;background:linear-gradient(#001a7a 0px,#001a7a 32px,#001b7c 64px,#001d7d 96px,#001f7d 128px,#01227e 160px,#022681 192px,#042c85 224px,#06318a 256px,#08388f 288px,#0b3e94 320px,#0e4599 352px,#114d9e 384px,#1454a3 416px,#175ba8 448px,#1a62ac 480px,#1d68af 512px,#206eb2 544px,#2274b5 576px,#2579b7 608px,#267db8 640px,#2880b9 672px,#2982ba 704px,#2a84ba 736px,#2a85ba 768px,#2a86ba 800px,#2b87ba 832px,#2b89ba 864px,#2c8bba 896px,#2c8dba 928px,#2c8dba 950px)"></i>
<i style="left:912px;width:17px;background:linear-gradient(#001b7c 0px,#001b7c 32px,#001c7e 64px,#001e7f 96px,#00217f 128px,#012481 160px,#022883 192px,#042d87 224px,#06338b 256px,#083990 288px,#0a4095 320px,#0d469a 352px,#104e9f 384px,#1455a4 416px,#175ca8 448px,#1a63ac 480px,#1d69b0 512px,#206fb3 544px,#2275b5 576px,#257ab7 608px,#277eb9 640px,#2881ba 672px,#2984ba 704px,#2a86bb 736px,#2a87ba 768px,#2b88ba 800px,#2b89ba 832px,#2c8bba 864px,#2c8dba 896px,#2d8fbb 928px,#2d8fbb 950px)"></i>
<i style="left:928px;width:17px;background:linear-gradient(#001c7d 0px,#001c7d 32px,#001e7f 64px,#002080 96px,#002281 128px,#012582 160px,#022a85 192px,#042f88 224px,#05348d 256px,#073a91 288px,#0a4196 320px,#0d489b 352px,#104fa0 384px,#1356a5 416px,#165da9 448px,#1a63ad 480px,#1d6ab0 512px,#2070b3 544px,#2276b6 576px,#257bb8 608px,#2780b9 640px,#2883ba 672px,#2985bb 704px,#2a87bb 736px,#2b88bb 768px,#2b89bb 800px,#2c8aba 832px,#2c8cbb 864px,#2d8ebb 896px,#2d90bb 928px,#2d90bb 950px)"></i>
<i style="left:944px;width:17px;background:linear-gradient(#001d7e 0px,#001d7e 32px,#001f80 64px,#002181 96px,#002482 128px,#012784 160px,#022b86 192px,#04308a 224px,#05368e 256px,#073b93 288px,#0a4297 320px,#0c499c 352px,#104fa1 384px,#1356a5 416px,#165da9 448px,#1964ad 480px,#1d6bb0 512px,#2071b3 544px,#2277b6 576px,#257cb8 608px,#2781ba 640px,#2984bb 672px,#2a87bb 704px,#2b88bb 736px,#2b8abb 768px,#2c8bbb 800px,#2c8cbb 832px,#2d8dbb 864px,#2d90bb 896px,#2e92bc 928px,#2e92bc 950px)"></i>
<i style="left:960px;width:17px;background:linear-gradient(#001f7f 0px,#001f7f 32px,#002181 64px,#002382 96px,#012583 128px,#012985 160px,#022d88 192px,#04328b 224px,#05378f 256px,#073d94 288px,#094399 320px,#0c4a9d 352px,#0f50a2 384px,#1257a6 416px,#165eaa 448px,#1965ad 480px,#1c6cb1 512px,#1f72b4 544px,#2278b6 576px,#257db8 608px,#2782ba 640px,#2986bb 672px,#2a88bc 704px,#2b8abc 736px,#2c8bbc 768px,#2c8cbb 800px,#2d8dbb 832px,#2d8fbc 864px,#2e91bc 896px,#2e93bd 928px,#2e93bd 950px)"></i>
<i style="left:976px;width:17px;background:linear-gradient(#002080 0px,#002080 32px,#002281 64px,#002483 96px,#012784 128px,#012a86 160px,#022e89 192px,#04338d 224px,#053891 256px,#073e95 288px,#09449a 320px,#0c4b9e 352px,#0f51a2 384px,#1258a6 416px,#165faa 448px,#1966ae 480px,#1c6cb1 512px,#1f73b4 544px,#2279b6 576px,#257eb9 608px,#2783ba 640px,#2987bb 672px,#2a89bc 704px,#2b8bbc 736px,#2c8cbc 768px,#2c8dbc 800px,#2d8ebc 832px,#2d90bc 864px,#2e93bd 896px,#2f95bd 928px,#2f95bd 950px)"></i>
<i style="left:992px;width:17px;background:linear-gradient(#002181 0px,#002181 32px,#002482 64px,#002684 96px,#012985 128px,#022c87 160px,#03308a 192px,#04358e 224px,#053a92 256px,#073f96 288px,#09459b 320px,#0c4c9f 352px,#0f52a3 384px,#1259a7 416px,#1560ab 448px,#1966ae 480px,#1c6db1 512px,#1f73b4 544px,#2279b6 576px,#257fb9 608px,#2784ba 640px,#2988bc 672px,#2b8abc 704px,#2b8cbc 736px,#2c8dbc 768px,#2d8ebc 800px,#2d8fbc 832px,#2e91bd 864px,#2f94bd 896px,#2f96be 928px,#2f96be 950px)"></i>
<i style="left:1008px;width:17px;background:linear-gradient(#002381 0px,#002381 32px,#002583 64px,#002884 96px,#012a86 128px,#022e88 160px,#03328b 192px,#04368f 224px,#053b93 256px,#074197 288px,#09479c 320px,#0c4da0 352px,#0f53a4 384px,#125aa7 416px,#1560ab 448px,#1967ae 480px,#1c6eb1 512px,#1f74b4 544px,#227ab7 576px,#257fb9 608px,#2785ba 640px,#2989bc 672px,#2b8bbc 704px,#2c8cbc 736px,#2c8dbc 768px,#2d8ebc 800px,#2d90bc 832px,#2e92bd 864px,#2f95be 896px,#3098bf 928px,#3098bf 950px)"></i>
<i style="left:1024px;width:17px;background:linear-gradient(#002482 0px,#002482 32px,#002783 64px,#002985 96px,#012c87 128px,#022f89 160px,#03338c 192px,#043890 224px,#053d94 256px,#074298 288px,#09489c 320px,#0c4ea1 352px,#0f54a4 384px,#125ba8 416px,#1561ab 448px,#1968af 480px,#1c6eb1 512px,#1f74b4 544px,#227ab7 576px,#2580b9 608px,#2785ba 640px,#2989bc 672px,#2b8bbc 704px,#2c8cbc 736px,#2c8dbc 768px,#2d8ebc 800px,#2e90bd 832px,#2e93bd 864px,#2f96bf 896px,#3099c0 928px,#3099c0 950px)"></i>
<i style="left:1040px;width:17px;background:linear-gradient(#002683 0px,#002683 32px,#002884 64px,#002b86 96px,#012e87 128px,#02318a 160px,#03358d 192px,#043991 224px,#063e95 256px,#074399 288px,#09499d 320px,#0c4fa1 352px,#0f55a5 384px,#125ba8 416px,#1562ac 448px,#1968af 480px,#1c6eb2 512px,#1f74b4 544px,#227ab6 576px,#2580b8 608px,#2785ba 640px,#2989bb 672px,#2b8bbc 704px,#2c8cbc 736px,#2c8dbc 768px,#2d8fbc 800px,#2e91bd 832px,#2f93be 864px,#2f97bf 896px,#309ac0 928px,#309ac0 950px)"></i>
<i style="left:1056px;width:17px;background:linear-gradient(#002784 0px,#002784 32px,#002a85 64px,#012c86 96px,#022f88 128px,#03328b 160px,#04368e 192px,#053a92 224px,#063f95 256px,#08449a 288px,#0a4a9e 320px,#0c50a2 352px,#0f56a5 384px,#125ca9 416px,#1662ac 448px,#1968af 480px,#1c6fb2 512px,#1f74b4 544px,#227ab6 576px,#257fb8 608px,#2784ba 640px,#2988bb 672px,#2b8abb 704px,#2b8cbc 736px,#2c8dbc 768px,#2d8ebc 800px,#2e91bd 832px,#2f94be 864px,#3098bf 896px,#319bc1 928px,#319bc1 950px)"></i>
<i style="left:1072px;width:17px;background:linear-gradient(#002985 0px,#002985 32px,#002b86 64px,#012e87 96px,#023189 128px,#03348c 160px,#04388f 192px,#053c92 224px,#074196 256px,#08469a 288px,#0a4b9e 320px,#0d51a2 352px,#1057a6 384px,#135da9 416px,#1663ac 448px,#1969af 480px,#1c6fb2 512px,#1f74b4 544px,#227ab6 576px,#257fb8 608px,#2783b9 640px,#2987ba 672px,#2a89bb 704px,#2b8bbb 736px,#2c8cbb 768px,#2d8ebc 800px,#2e91bd 832px,#2f94be 864px,#3099c0 896px,#319cc1 928px,#319cc1 950px)"></i>
<i style="left:1088px;width:17px;background:linear-gradient(#002a86 0px,#002a86 32px,#002d87 64px,#012f88 96px,#02328a 128px,#03358c 160px,#053990 192px,#063d93 224px,#074297 256px,#09479b 288px,#0b4c9f 320px,#0d52a3 352px,#1057a6 384px,#135da9 416px,#1663ac 448px,#1969af 480px,#1c6fb1 512px,#1f74b4 544px,#2279b6 576px,#257eb7 608px,#2782b9 640px,#2986ba 672px,#2a88ba 704px,#2b8aba 736px,#2c8bbb 768px,#2d8ebb 800px,#2e91bd 832px,#2f95be 864px,#3099c0 896px,#319dc2 928px,#319dc2 950px)"></i>
<i style="left:1104px;width:17px;background:linear-gradient(#002c87 0px,#002c87 32px,#002e88 64px,#013189 96px,#03348b 128px,#04378d 160px,#053b91 192px,#063f94 224px,#084398 256px,#0a489c 288px,#0b4d9f 320px,#0e53a3 352px,#1058a6 384px,#135ea9 416px,#1664ac 448px,#1969af 480px,#1c6fb1 512px,#1f74b3 544px,#2279b5 576px,#247db7 608px,#2781b8 640px,#2884b9 672px,#2a87b9 704px,#2b89ba 736px,#2c8aba 768px,#2d8dbb 800px,#2e90bc 832px,#2f95be 864px,#309ac0 896px,#319ec2 928px,#319ec2 950px)"></i>
<i style="left:1120px;width:17px;background:linear-gradient(#002d89 0px,#002d89 32px,#01308a 64px,#02328a 96px,#03358c 128px,#04388f 160px,#063c92 192px,#074095 224px,#084599 256px,#0a499c 288px,#0c4ea0 320px,#0e54a3 352px,#1159a7 384px,#145faa 416px,#1764ac 448px,#1a69af 480px,#1c6fb1 512px,#1f74b3 544px,#2278b5 576px,#247db6 608px,#2680b7 640px,#2883b8 672px,#2985b9 704px,#2b87b9 736px,#2b89b9 768px,#2c8cba 800px,#2e90bc 832px,#2f95be 864px,#309bc1 896px,#32a0c2 928px,#32a0c2 950px)"></i>
<i style="left:1136px;width:17px;background:linear-gradient(#002f8a 0px,#002f8a 32px,#01318b 64px,#02348c 96px,#04378e 128px,#053a90 160px,#063e93 192px,#084296 224px,#09469a 256px,#0b4b9d 288px,#0d4fa0 320px,#0f55a4 352px,#125aa7 384px,#145faa 416px,#1764ac 448px,#1a6aaf 480px,#1d6fb1 512px,#1f74b3 544px,#2278b5 576px,#247cb6 608px,#267fb7 640px,#2882b7 672px,#2984b8 704px,#2a86b8 736px,#2b88b9 768px,#2c8bba 800px,#2d90bb 832px,#2f95be 864px,#319cc1 896px,#32a1c3 928px,#32a1c3 950px)"></i>
<i style="left:1152px;width:17px;background:linear-gradient(#00318c 0px,#00318c 32px,#01338d 64px,#03368e 96px,#04398f 128px,#053c91 160px,#073f94 192px,#084397 224px,#0a479a 256px,#0c4c9e 288px,#0e51a1 320px,#1056a4 352px,#125ba7 384px,#1560aa 416px,#1765ad 448px,#1a6aaf 480px,#1d6fb1 512px,#2073b3 544px,#2278b4 576px,#247bb5 608px,#267eb6 640px,#2881b7 672px,#2983b7 704px,#2a85b7 736px,#2b87b8 768px,#2c8ab9 800px,#2d8fbb 832px,#2f95be 864px,#319dc1 896px,#32a2c3 928px,#32a2c3 950px)"></i>
<i style="left:1168px;width:17px;background:linear-gradient(#00328d 0px,#00328d 32px,#02358f 64px,#033890 96px,#053a91 128px,#063d93 160px,#084196 192px,#094598 224px,#0b499b 256px,#0c4d9e 288px,#0e52a1 320px,#1156a5 352px,#135ba7 384px,#1560aa 416px,#1865ad 448px,#1b6aaf 480px,#1d6fb1 512px,#2073b3 544px,#2277b4 576px,#247bb5 608px,#267db6 640px,#2880b6 672px,#2982b6 704px,#2a83b7 736px,#2b86b7 768px,#2c89b8 800px,#2d8eba 832px,#2f95bd 864px,#319ec1 896px,#33a4c4 928px,#33a4c4 950px)"></i>
<i style="left:1184px;width:17px;background:linear-gradient(#00348f 0px,#00348f 32px,#023791 64px,#043992 96px,#053c93 128px,#073f95 160px,#084397 192px,#0a4699 224px,#0c4a9c 256px,#0d4e9f 288px,#0f53a2 320px,#1157a5 352px,#145ca8 384px,#1661aa 416px,#1866ad 448px,#1b6aaf 480px,#1d6fb1 512px,#2073b2 544px,#2277b4 576px,#247ab5 608px,#267db5 640px,#277fb6 672px,#2981b6 704px,#2a82b6 736px,#2b85b6 768px,#2c88b7 800px,#2d8eba 832px,#2f96bd 864px,#319fc1 896px,#33a5c4 928px,#33a5c4 950px)"></i>
<i style="left:1200px;width:17px;background:linear-gradient(#013691 0px,#013691 32px,#033992 64px,#043b94 96px,#063e95 128px,#074196 160px,#094498 192px,#0b489b 224px,#0c4b9d 256px,#0e50a0 288px,#1054a3 320px,#1258a5 352px,#145da8 384px,#1762ab 416px,#1966ad 448px,#1b6baf 480px,#1e6fb1 512px,#2073b2 544px,#2277b3 576px,#247ab4 608px,#267cb5 640px,#287eb5 672px,#2980b5 704px,#2a81b5 736px,#2a84b6 768px,#2c87b7 800px,#2d8db9 832px,#2f96bd 864px,#31a0c1 896px,#33a7c4 928px,#33a7c4 950px)"></i>
<i style="left:1216px;width:17px;background:linear-gradient(#013792 0px,#013792 32px,#033a94 64px,#053d96 96px,#074097 128px,#084398 160px,#0a469a 192px,#0c499c 224px,#0d4d9e 256px,#0f51a0 288px,#1155a3 320px,#1359a6 352px,#155ea8 384px,#1762ab 416px,#1a67ad 448px,#1c6baf 480px,#1e6fb1 512px,#2173b2 544px,#2377b3 576px,#257ab4 608px,#267cb5 640px,#287eb5 672px,#297fb5 704px,#2a81b5 736px,#2a83b5 768px,#2b86b6 800px,#2d8db8 832px,#2f96bc 864px,#32a1c2 896px,#34a9c5 928px,#34a9c5 950px)"></i>
<i style="left:1232px;width:17px;background:linear-gradient(#023994 0px,#023994 32px,#043c96 64px,#053f97 96px,#074298 128px,#094499 160px,#0b479b 192px,#0c4b9d 224px,#0e4e9f 256px,#1052a1 288px,#1256a4 320px,#145aa6 352px,#165fa9 384px,#1863ab 416px,#1a68ad 448px,#1c6caf 480px,#1f70b1 512px,#2174b2 544px,#2377b3 576px,#257ab4 608px,#277cb4 640px,#287eb5 672px,#297fb5 704px,#2a81b4 736px,#2a83b4 768px,#2b86b5 800px,#2d8cb8 832px,#2f96bc 864px,#32a3c2 896px,#34abc6 928px,#34abc6 950px)"></i>
<i style="left:1248px;width:17px;background:linear-gradient(#023b95 0px,#023b95 32px,#043e97 64px,#064199 96px,#08439a 128px,#0a469b 160px,#0c499c 192px,#0d4c9e 224px,#0f4fa0 256px,#1153a2 288px,#1357a4 320px,#145ba7 352px,#1660a9 384px,#1964ab 416px,#1b68ae 448px,#1d6caf 480px,#1f70b1 512px,#2174b2 544px,#2377b3 576px,#257ab4 608px,#277cb5 640px,#287eb5 672px,#297fb5 704px,#2a81b4 736px,#2b83b4 768px,#2c86b5 800px,#2d8cb7 832px,#2f97bc 864px,#33a4c2 896px,#35adc6 928px,#35adc6 950px)"></i>
<i style="left:1264px;width:17px;background:linear-gradient(#033c97 0px,#033c97 32px,#053f98 64px,#07429a 96px,#09459b 128px,#0b479c 160px,#0c4a9d 192px,#0e4d9f 224px,#1051a0 256px,#1254a3 288px,#1458a5 320px,#155ca7 352px,#1761aa 384px,#1965ac 416px,#1b69ae 448px,#1d6db0 480px,#2071b1 512px,#2275b2 544px,#2478b3 576px,#267bb4 608px,#277db5 640px,#297fb5 672px,#2a80b5 704px,#2a81b4 736px,#2b83b4 768px,#2c86b5 800px,#2d8cb7 832px,#3097bc 864px,#33a6c3 896px,#35afc7 928px,#35afc7 950px)"></i>
<i style="left:1280px;width:17px;background:linear-gradient(#033e98 0px,#033e98 32px,#054199 64px,#07449b 96px,#09469c 128px,#0b499d 160px,#0d4c9e 192px,#0f4f9f 224px,#1152a1 256px,#1356a3 288px,#1459a5 320px,#165da8 352px,#1862aa 384px,#1a66ac 416px,#1c6aae 448px,#1e6eb0 480px,#2072b1 512px,#2275b3 544px,#2478b4 576px,#267bb4 608px,#287eb5 640px,#2980b5 672px,#2a81b5 704px,#2b83b5 736px,#2b84b5 768px,#2c87b5 800px,#2e8db7 832px,#3099bc 864px,#34a8c3 896px,#36b1c8 928px,#36b1c8 950px)"></i>
<i style="left:1296px;width:17px;background:linear-gradient(#033f98 0px,#033f98 32px,#06429a 64px,#08459c 96px,#0a489d 128px,#0c4a9e 160px,#0e4d9f 192px,#1050a0 224px,#1253a2 256px,#1457a4 288px,#155ba6 320px,#175fa8 352px,#1963aa 384px,#1b67ad 416px,#1d6baf 448px,#1f6fb0 480px,#2173b2 512px,#2376b3 544px,#2579b4 576px,#277cb5 608px,#287fb5 640px,#2a81b6 672px,#2b83b6 704px,#2b84b6 736px,#2c86b6 768px,#2d8ab6 800px,#2e90b8 832px,#319bbd 864px,#34a9c4 896px,#37b2c8 928px,#37b2c8 950px)"></i>
<i style="left:1312px;width:17px;background:linear-gradient(#044199 0px,#044199 32px,#06449b 64px,#08469c 96px,#0b499d 128px,#0d4c9e 160px,#0f4fa0 192px,#1151a1 224px,#1355a3 256px,#1558a4 288px,#165ca6 320px,#1860a9 352px,#1a64ab 384px,#1b68ad 416px,#1d6caf 448px,#1f70b1 480px,#2174b2 512px,#2377b3 544px,#257bb4 576px,#277eb5 608px,#2980b6 640px,#2a83b7 672px,#2b85b7 704px,#2c87b7 736px,#2d89b7 768px,#2e8cb7 800px,#2f93ba 832px,#329dbe 864px,#35aac4 896px,#37b3c8 928px,#37b3c8 950px)"></i>
<i style="left:1328px;width:17px;background:linear-gradient(#04429a 0px,#04429a 32px,#07459b 64px,#09489d 96px,#0c4a9e 128px,#0e4d9f 160px,#1050a0 192px,#1253a2 224px,#1456a3 256px,#1659a5 288px,#175da7 320px,#1961a9 352px,#1a65ac 384px,#1c69ae 416px,#1e6db0 448px,#2071b1 480px,#2275b3 512px,#2478b4 544px,#267cb5 576px,#287fb6 608px,#2a82b7 640px,#2b85b7 672px,#2c87b8 704px,#2d89b8 736px,#2e8cb8 768px,#2f90b9 800px,#3096bb 832px,#33a0bf 864px,#36acc4 896px,#38b4c8 928px,#38b4c8 950px)"></i>
<i style="left:1344px;width:17px;background:linear-gradient(#05439a 0px,#05439a 32px,#07469c 64px,#0a499d 96px,#0c4c9f 128px,#0f4fa0 160px,#1151a1 192px,#1454a2 224px,#1557a4 256px,#175ba6 288px,#185ea8 320px,#1a62aa 352px,#1b66ac 384px,#1d6aae 416px,#1e6eb0 448px,#2072b2 480px,#2276b3 512px,#247ab4 544px,#267db5 576px,#2981b7 608px,#2b84b8 640px,#2c87b9 672px,#2d8ab9 704px,#2e8cb9 736px,#2f8fba 768px,#3093bb 800px,#319abd 832px,#34a3c0 864px,#37adc5 896px,#39b5c8 928px,#39b5c8 950px)"></i>
<i style="left:1360px;width:17px;background:linear-gradient(#05459b 0px,#05459b 32px,#08479d 64px,#0a4a9e 96px,#0d4d9f 128px,#1050a1 160px,#1353a2 192px,#1556a3 224px,#1659a4 256px,#185ca6 288px,#1960a8 320px,#1a64aa 352px,#1c68ad 384px,#1d6caf 416px,#1f70b1 448px,#2173b2 480px,#2377b3 512px,#257bb5 544px,#277fb6 576px,#2983b7 608px,#2b86b9 640px,#2d8aba 672px,#2e8dbb 704px,#2f8fbb 736px,#3093bb 768px,#3197bc 800px,#329dbe 832px,#35a5c1 864px,#37afc5 896px,#39b6c8 928px,#39b6c8 950px)"></i>
<i style="left:1376px;width:17px;background:linear-gradient(#06469c 0px,#06469c 32px,#08499d 64px,#0b4c9e 96px,#0e4ea0 128px,#1151a1 160px,#1454a3 192px,#1657a4 224px,#185aa5 256px,#195da7 288px,#1a61a9 320px,#1b65ab 352px,#1d69ad 384px,#1e6daf 416px,#2071b1 448px,#2175b3 480px,#2379b4 512px,#257db5 544px,#2881b6 576px,#2a85b8 608px,#2c89ba 640px,#2e8cbb 672px,#2f90bc 704px,#3093bd 736px,#3196bd 768px,#329bbe 800px,#33a1c0 832px,#36a8c2 864px,#38b1c6 896px,#3ab8c8 928px,#3ab8c8 950px)"></i>
<i style="left:1392px;width:17px;background:linear-gradient(#06479c 0px,#06479c 32px,#094a9e 64px,#0c4d9f 96px,#0f50a1 128px,#1253a2 160px,#1556a4 192px,#1758a5 224px,#195ba6 256px,#1a5fa7 288px,#1b62a9 320px,#1c66ab 352px,#1d6aae 384px,#1f6eb0 416px,#2072b2 448px,#2276b3 480px,#247ab4 512px,#267eb5 544px,#2883b7 576px,#2b87b9 608px,#2d8bbb 640px,#2f8fbc 672px,#3093be 704px,#3196be 736px,#329abf 768px,#339ec0 800px,#34a4c1 832px,#37abc3 864px,#39b3c6 896px,#3bb9c9 928px,#3bb9c9 950px)"></i>
<i style="left:1408px;width:17px;background:linear-gradient(#07489d 0px,#07489d 32px,#094b9e 64px,#0c4ea0 96px,#1051a1 128px,#1355a3 160px,#1657a5 192px,#195aa6 224px,#1a5da6 256px,#1b60a8 288px,#1c64aa 320px,#1d68ac 352px,#1e6cae 384px,#1f70b1 416px,#2174b3 448px,#2278b4 480px,#247cb5 512px,#2680b6 544px,#2984b7 576px,#2b89b9 608px,#2e8ebc 640px,#3092be 672px,#3196bf 704px,#329ac0 736px,#329ec1 768px,#33a2c1 800px,#35a7c3 832px,#37aec4 864px,#3ab5c7 896px,#3cbbc9 928px,#3cbbc9 950px)"></i>
<i style="left:1424px;width:17px;background:linear-gradient(#07499e 0px,#07499e 32px,#0a4c9f 64px,#0d4fa1 96px,#1153a2 128px,#1556a5 160px,#1859a6 192px,#1a5ca7 224px,#1b5ea7 256px,#1c62a8 288px,#1d66aa 320px,#1d69ad 352px,#1f6eaf 384px,#2072b2 416px,#2176b3 448px,#237ab4 480px,#257eb5 512px,#2782b6 544px,#2986b8 576px,#2c8bba 608px,#2f90bd 640px,#3195bf 672px,#329ac1 704px,#339ec2 736px,#33a2c2 768px,#34a6c3 800px,#36abc4 832px,#38b1c6 864px,#3bb8c8 896px,#3dbdca 928px,#3dbdca 950px)"></i>
<i style="left:1440px;width:17px;background:linear-gradient(#084a9e 0px,#084a9e 32px,#0a4da0 64px,#0e50a2 96px,#1254a4 128px,#1658a6 160px,#195ba7 192px,#1b5da8 224px,#1c60a8 256px,#1d63a9 288px,#1d67ab 320px,#1e6bad 352px,#1f6fb0 384px,#2173b2 416px,#2277b4 448px,#247bb5 480px,#257fb6 512px,#2784b7 544px,#2a88b8 576px,#2c8ebb 608px,#2f93be 640px,#3298c0 672px,#339dc2 704px,#33a1c3 736px,#34a5c4 768px,#35a9c5 800px,#37aec5 832px,#39b3c7 864px,#3cbac9 896px,#3dbfca 928px,#3dbfca 950px)"></i>
<i style="left:1456px;width:17px;background:linear-gradient(#094b9f 0px,#094b9f 32px,#0b4ea1 64px,#0e51a3 96px,#1356a5 128px,#175aa7 160px,#1b5da9 192px,#1c5fa9 224px,#1d62a9 256px,#1e65aa 288px,#1e69ac 320px,#1f6dae 352px,#2071b0 384px,#2175b3 416px,#2379b5 448px,#247db6 480px,#2681b6 512px,#2885b7 544px,#2a8ab9 576px,#2d90bb 608px,#3095be 640px,#329bc1 672px,#34a0c3 704px,#34a4c5 736px,#34a8c6 768px,#35adc6 800px,#37b1c7 832px,#3ab6c8 864px,#3cbcc9 896px,#3ec1cb 928px,#3ec1cb 950px)"></i>
<i style="left:1472px;width:17px;background:linear-gradient(#094ca0 0px,#094ca0 32px,#0c4fa2 64px,#0f53a4 96px,#1457a6 128px,#185ca9 160px,#1c5faa 192px,#1d61aa 224px,#1e64aa 256px,#1e67ab 288px,#1f6bac 320px,#206fae 352px,#2173b1 384px,#2277b3 416px,#237bb5 448px,#257fb6 480px,#2683b7 512px,#2887b8 544px,#2b8cb9 576px,#2d92bc 608px,#3098bf 640px,#339dc2 672px,#34a2c4 704px,#34a7c6 736px,#35abc7 768px,#36b0c7 800px,#38b4c8 832px,#3ab9c9 864px,#3dbfca 896px,#3fc3cc 928px,#3fc3cc 950px)"></i>
<i style="left:1488px;width:17px;background:linear-gradient(#094da1 0px,#094da1 32px,#0c50a2 64px,#1054a4 96px,#1458a7 128px,#195ca9 160px,#1c60ab 192px,#1e62ab 224px,#1e65ab 256px,#1f68ac 288px,#1f6cad 320px,#2070af 352px,#2174b1 384px,#2278b3 416px,#247cb5 448px,#2580b6 480px,#2784b7 512px,#2888b8 544px,#2b8dba 576px,#2e93bd 608px,#3099c0 640px,#339ec3 672px,#34a4c5 704px,#35a8c6 736px,#35adc7 768px,#36b1c8 800px,#38b5c9 832px,#3bbac9 864px,#3dc0cb 896px,#3fc4cd 928px,#3fc4cd 950px)"></i>
<i style="left:1504px;width:17px;background:linear-gradient(#094da1 0px,#094da1 32px,#0c50a2 64px,#1054a4 96px,#1458a7 128px,#195ca9 160px,#1c60ab 192px,#1e62ab 224px,#1e65ab 256px,#1f68ac 288px,#1f6cad 320px,#2070af 352px,#2174b1 384px,#2278b3 416px,#247cb5 448px,#2580b6 480px,#2784b7 512px,#2888b8 544px,#2b8dba 576px,#2e93bd 608px,#3099c0 640px,#339ec3 672px,#34a4c5 704px,#35a8c6 736px,#35adc7 768px,#36b1c8 800px,#38b5c9 832px,#3bbac9 864px,#3dc0cb 896px,#3fc4cd 928px,#3fc4cd 950px)"></i>
</div></div>
<div class="panel"></div>
<div class="goback"></div>
<svg class="ic" style="left:126px;top:142px" width="11" height="9" viewBox="0 0 11 9" fill="none" stroke="#f0f0f0" stroke-width="1.35" stroke-linecap="round" stroke-linejoin="round"><path d="M10 4.5H1.2M4.8 1L1.2 4.5 4.8 8"/></svg>
<div class="pill" style="left:602px;width:79px"></div>
<div class="pill" style="left:688px;width:167px"></div>
<div class="dot" style="left:610px;top:176px;background:#4bbd6d"></div>
<svg class="ic" style="left:690px;top:168px" width="40" height="24" viewBox="0 0 40 24" fill="none" stroke-linecap="round" stroke-linejoin="round">
<g stroke="#f4f4f4" stroke-width="1.1"><path d="M7.3 7.1Q8.6 6.2 9.9 6.6Q10.6 6.9 10.6 8.2V11.5M10.6 9Q7.1 8.7 7 10.3Q7.1 11.6 8.6 11.4Q10 11.2 10.6 10.1"/><path d="M11.4 6.6L12.9 11.4L14.4 7.3L15.9 11.4L17.5 6.6"/><path d="M22 7.1Q21 6.3 19.9 6.6Q18.9 6.9 19.2 7.9Q19.5 8.6 20.8 8.9Q22.3 9.3 22 10.6Q21.6 11.6 20.3 11.4Q19.2 11.2 18.8 10.6"/></g>
<path d="M6.2 13.3Q13.5 17.6 21.6 13.7" stroke="#eebd24" stroke-width="1.25"/><path d="M19.8 13.1L22.8 12.9L22.4 15.6" stroke="#eebd24" stroke-width="1.05"/>
</svg>
<div class="tab-ul"></div>
<div class="svcsh"></div><div class="svc"><div class="svc-h"></div></div>
<div class="card" style="left:196px"></div>
<div class="card" style="left:466px"></div>
<div class="card" style="left:735.4px"></div>
<div class="dot" style="left:210.5px;top:497.5px;background:#4bbd6d"></div>
<div class="dot" style="left:480px;top:497.5px;background:#f7d80c"></div>
<svg class="ic" style="left:851.2px;top:422.9px" width="24" height="24" viewBox="0 0 24 24" fill="none" stroke="#f6f6f6" stroke-width="2.5" stroke-linecap="round"><path d="M12 1.7V22.3M1.7 12H22.3"/></svg>
<svg class="ic" style="left:560px;top:540px" width="30" height="110" viewBox="0 0 30 110"><path d="M15 4.5 L26.5 28 L19.6 24.8 L15.3 106 L14.7 106 L10.4 24.8 L3.6 28 Z" fill="#f8d90a"/></svg>
<svg class="ic" style="left:210.3px;top:410.8px" width="14" height="14" viewBox="0 0 24 24" fill="none" stroke="#ececec" stroke-width="2.3" stroke-linecap="round" stroke-linejoin="round"><line x1="6" y1="3" x2="6" y2="15"/><circle cx="18" cy="6" r="3"/><circle cx="6" cy="18" r="3"/><path d="M18 9a9 9 0 0 1-9 9"/></svg>
<svg class="ic" style="left:268.0px;top:410.9px" width="14" height="14" viewBox="0 0 24 24" fill="none" stroke="#ececec" stroke-width="2.3" stroke-linecap="round" stroke-linejoin="round"><path d="M12 3v6"/><circle cx="12" cy="12" r="3"/><path d="M12 15v6"/></svg>
<svg class="ic" style="left:210.3px;top:462.8px" width="14" height="14" viewBox="0 0 24 24"><path fill="#f0f0f0" d="M12 .3a12 12 0 0 0-3.8 23.4c.6.1.8-.3.8-.6v-2c-3.3.7-4-1.6-4-1.6-.6-1.4-1.4-1.8-1.4-1.8-1-.7.1-.7.1-.7 1.2.1 1.8 1.2 1.8 1.2 1 1.8 2.8 1.3 3.5 1 0-.8.4-1.3.7-1.6-2.7-.3-5.5-1.3-5.5-6 0-1.2.5-2.3 1.3-3.1-.2-.4-.6-1.6 0-3.2 0 0 1-.3 3.4 1.2a11.5 11.5 0 0 1 6 0c2.3-1.5 3.3-1.2 3.3-1.2.6 1.6.2 2.8 0 3.2.9.8 1.3 1.9 1.3 3.2 0 4.6-2.8 5.6-5.5 5.9.5.4.9 1 .9 2.2v3.3c0 .3.1.7.8.6A12 12 0 0 0 12 .3"/></svg>
<svg class="ic" style="left:479.7px;top:410.8px" width="14" height="14" viewBox="0 0 24 24" fill="none" stroke="#ececec" stroke-width="2.3" stroke-linecap="round" stroke-linejoin="round"><line x1="6" y1="3" x2="6" y2="15"/><circle cx="18" cy="6" r="3"/><circle cx="6" cy="18" r="3"/><path d="M18 9a9 9 0 0 1-9 9"/></svg>
<svg class="ic" style="left:573.3px;top:410.9px" width="14" height="14" viewBox="0 0 24 24" fill="none" stroke="#ececec" stroke-width="2.3" stroke-linecap="round" stroke-linejoin="round"><path d="M12 3v6"/><circle cx="12" cy="12" r="3"/><path d="M12 15v6"/></svg>
<svg class="ic" style="left:480.0px;top:462.8px" width="14" height="14" viewBox="0 0 24 24"><path fill="#f0f0f0" d="M12 .3a12 12 0 0 0-3.8 23.4c.6.1.8-.3.8-.6v-2c-3.3.7-4-1.6-4-1.6-.6-1.4-1.4-1.8-1.4-1.8-1-.7.1-.7.1-.7 1.2.1 1.8 1.2 1.8 1.2 1 1.8 2.8 1.3 3.5 1 0-.8.4-1.3.7-1.6-2.7-.3-5.5-1.3-5.5-6 0-1.2.5-2.3 1.3-3.1-.2-.4-.6-1.6 0-3.2 0 0 1-.3 3.4 1.2a11.5 11.5 0 0 1 6 0c2.3-1.5 3.3-1.2 3.3-1.2.6 1.6.2 2.8 0 3.2.9.8 1.3 1.9 1.3 3.2 0 4.6-2.8 5.6-5.5 5.9.5.4.9 1 .9 2.2v3.3c0 .3.1.7.8.6A12 12 0 0 0 12 .3"/></svg>
<span class="t" style="left:140.80px;top:139.72px;font-size:12.50px;letter-spacing:-0.067px;-webkit-text-stroke:0.35px #f6f6f6;color:#f6f6f6;">Go back</span>
<span class="t" style="left:677.30px;top:134.69px;font-size:26.00px;letter-spacing:-0.914px;font-weight:700;-webkit-text-stroke:0.30px #ffffff;color:#ffffff;">Auth API</span>
<span class="t" style="left:623.80px;top:173.76px;font-size:10.80px;letter-spacing:-0.088px;-webkit-text-stroke:0.45px #f0f0f0;color:#f0f0f0;">2 Running</span>
<span class="t" style="left:720.50px;top:173.86px;font-size:10.80px;letter-spacing:-0.028px;-webkit-text-stroke:0.45px #f0f0f0;color:#f0f0f0;">Northern Virginia, US East</span>
<span class="t" style="left:393.00px;top:209.65px;font-size:14.00px;letter-spacing:-0.013px;-webkit-text-stroke:0.30px #f4f4f4;color:#f4f4f4;">Dashboard</span>
<span class="t" style="left:496.30px;top:209.65px;font-size:14.00px;letter-spacing:0.186px;-webkit-text-stroke:0.30px #f4f4f4;color:#f4f4f4;">Services</span>
<span class="t" style="left:585.70px;top:209.65px;font-size:14.00px;letter-spacing:0.167px;-webkit-text-stroke:0.30px #f4f4f4;color:#f4f4f4;">Scaling</span>
<span class="t" style="left:667.20px;top:209.65px;font-size:14.00px;letter-spacing:0.333px;-webkit-text-stroke:0.30px #f4f4f4;color:#f4f4f4;">Monitoring</span>
<span class="t" style="left:769.60px;top:209.65px;font-size:14.00px;letter-spacing:0.025px;-webkit-text-stroke:0.30px #f4f4f4;color:#f4f4f4;">Shell</span>
<span class="t" style="left:835.00px;top:209.65px;font-size:14.00px;letter-spacing:0.150px;-webkit-text-stroke:0.30px #f4f4f4;color:#f4f4f4;">Deployments</span>
<span class="t" style="left:952.80px;top:209.65px;font-size:14.00px;letter-spacing:-0.200px;-webkit-text-stroke:0.30px #f4f4f4;color:#f4f4f4;">Ops</span>
<span class="t" style="left:1012.50px;top:209.65px;font-size:14.00px;letter-spacing:0.186px;-webkit-text-stroke:0.30px #f4f4f4;color:#f4f4f4;">Settings</span>
<span class="t" style="left:699.20px;top:277.15px;font-size:14.00px;letter-spacing:0.671px;-webkit-text-stroke:0.30px #f0f0f0;color:#f0f0f0;">Services</span>
<span class="t" style="left:211.00px;top:386.79px;font-size:13.00px;letter-spacing:0.350px;-webkit-text-stroke:0.30px #f5f5f5;color:#f5f5f5;">backend</span>
<span class="t" style="left:227.60px;top:411.29px;font-size:13.00px;letter-spacing:-0.600px;-webkit-text-stroke:0.30px #f5f5f5;color:#f5f5f5;">main</span>
<span class="t" style="left:283.40px;top:411.29px;font-size:13.00px;letter-spacing:-0.183px;-webkit-text-stroke:0.30px #f5f5f5;color:#f5f5f5;">e2a8858</span>
<span class="t" style="left:227.70px;top:463.29px;font-size:13.00px;letter-spacing:0.350px;-webkit-text-stroke:0.30px #f5f5f5;color:#f5f5f5;">localopsco/sample-service</span>
<span class="t" style="left:224.60px;top:494.49px;font-size:13.00px;letter-spacing:-0.600px;-webkit-text-stroke:0.30px #f5f5f5;color:#f5f5f5;">Running</span>
<span class="t" style="left:480.80px;top:386.79px;font-size:13.00px;letter-spacing:-0.157px;-webkit-text-stroke:0.30px #f5f5f5;color:#f5f5f5;">backend (PR#11)</span>
<span class="t" style="left:496.90px;top:411.29px;font-size:13.00px;letter-spacing:0.100px;-webkit-text-stroke:0.30px #f5f5f5;color:#f5f5f5;">fix-issue30</span>
<span class="t" style="left:589.20px;top:411.29px;font-size:13.00px;letter-spacing:-0.167px;-webkit-text-stroke:0.30px #f5f5f5;color:#f5f5f5;">895e952</span>
<span class="t" style="left:497.10px;top:463.29px;font-size:13.00px;letter-spacing:0.354px;-webkit-text-stroke:0.30px #f5f5f5;color:#f5f5f5;">localopsco/sample-service</span>
<span class="t" style="left:494.00px;top:494.49px;font-size:13.00px;letter-spacing:-0.267px;-webkit-text-stroke:0.30px #f5f5f5;color:#f5f5f5;">Deploy queued</span>
<span class="t" style="left:824.20px;top:461.34px;font-size:12.00px;letter-spacing:0.267px;-webkit-text-stroke:0.30px #f5f5f5;color:#f5f5f5;">Add a Service</span>
</body></html>
